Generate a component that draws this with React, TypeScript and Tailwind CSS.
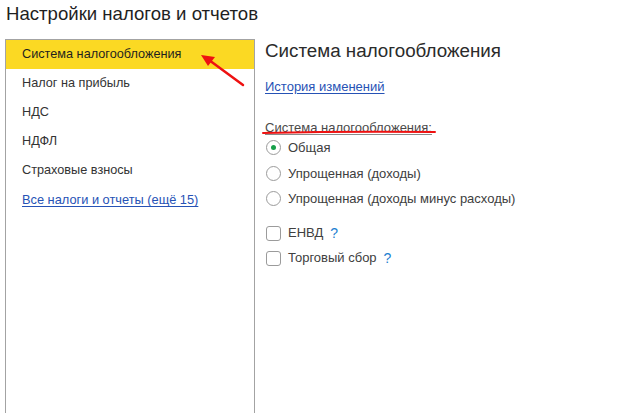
import { useState } from "react";

const menu = [
  "Система налогообложения",
  "Налог на прибыль",
  "НДС",
  "НДФЛ",
  "Страховые взносы",
];

const regimes = [
  "Общая",
  "Упрощенная (доходы)",
  "Упрощенная (доходы минус расходы)",
];

const Radio = ({ checked }: { checked: boolean }) => (
  <span className="w-[15px] h-[15px] rounded-full border border-[#9b9b9b] bg-white flex items-center justify-center shrink-0">
    {checked && <span className="w-[5px] h-[5px] rounded-full bg-[#17a04a]"></span>}
  </span>
);

const Checkbox = () => (
  <span className="w-[15px] h-[15px] rounded-[3px] border border-[#9b9b9b] bg-white shrink-0"></span>
);

export default function App() {
  const [regime, setRegime] = useState(0);

  return (
    <div className="relative w-[641px] h-[413px] bg-white overflow-hidden text-[#333] font-['Liberation_Sans',Arial,sans-serif]">
      {/* Title */}
      <div className="h-[39px] pl-[6px] pt-[3px] text-[18.6px] leading-[22px] text-[#1f1f1f]">
        Настройки налогов и отчетов
      </div>

      <div className="flex h-[374px]">
        {/* Left menu */}
        <div className="ml-[5px] w-[250px] h-full border border-b-0 border-[#a3a3a3] flex flex-col">
          {menu.map((item, i) => (
            <div
              key={item}
              className={`h-[29px] shrink-0 flex items-center pl-[16px] pt-[1px] text-[12.7px] ${
                i === 0 ? "bg-[#fbd923] text-[#1f1f1f]" : "text-[#333]"
              }`}
            >
              {item}
            </div>
          ))}
          <div className="h-[29px] flex items-center pl-[16px] pt-[1px] text-[12.8px]">
            <span className="text-[#2652b5] underline underline-offset-2">
              Все налоги и отчеты (ещё 15)
            </span>
          </div>
        </div>

        {/* Right panel */}
        <div className="ml-[10px] flex flex-col">
          <div className="h-[23px] text-[18.8px] leading-[23px] text-[#2b2b2b]">
            Система налогообложения
          </div>
          <div className="mt-[16px] h-[18px] leading-[18px] text-[13px]">
            <span className="text-[#2652b5] underline underline-offset-2">История изменений</span>
          </div>
          <div className="mt-[24px] h-[16px] leading-[16px] text-[13px] text-[#4a4a4a]">
            <span className="underline decoration-[#8a8a8a] underline-offset-2">
              Система налогообложения:
            </span>
          </div>

          <div className="mt-[-1px] flex flex-col">
            {regimes.map((r, i) => (
              <div
                key={r}
                onClick={() => setRegime(i)}
                className="h-[25.5px] flex items-center gap-[7px] pl-[1px] text-[13px] text-[#404040] cursor-pointer"
              >
                <Radio checked={regime === i} />
                <span>{r}</span>
              </div>
            ))}
          </div>

          <div className="mt-[9px] flex flex-col">
            <div className="h-[25px] flex items-center gap-[7px] pl-[1px] text-[13px] text-[#404040]">
              <Checkbox />
              <span>ЕНВД</span>
              <span className="text-[#1d7fd1] text-[14px]">?</span>
            </div>
            <div className="h-[25px] flex items-center gap-[7px] pl-[1px] text-[13px] text-[#404040]">
              <Checkbox />
              <span>Торговый сбор</span>
              <span className="text-[#1d7fd1] text-[14px]">?</span>
            </div>
          </div>
        </div>
      </div>

      {/* Annotations: red arrow and underline */}
      <svg className="absolute left-0 top-0 pointer-events-none" width="641" height="413">
        <line x1="243" y1="85" x2="209" y2="60" stroke="#ee1111" strokeWidth="2.5" strokeLinecap="round" />
        <polygon points="201,55 215,57 208,66" fill="#ee1111" />
        <path d="M263 133 Q350 131 435 132" stroke="#ee1111" strokeWidth="2" fill="none" strokeLinecap="round" />
      </svg>
    </div>
  );
}
